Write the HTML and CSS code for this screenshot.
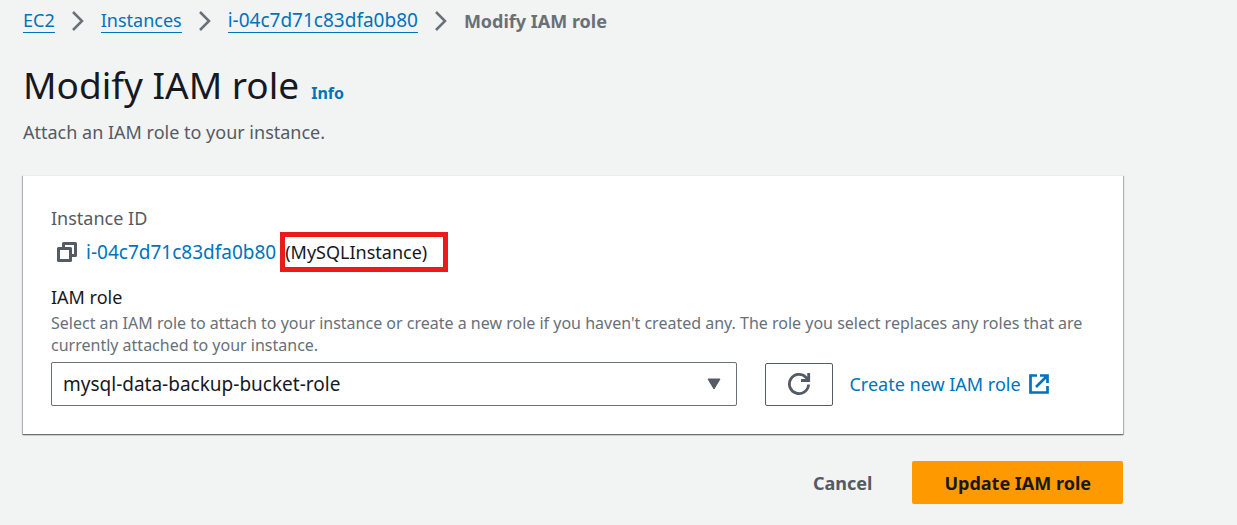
FILE: index.html
```html
<!DOCTYPE html>
<html lang="en">
<head>
<meta charset="utf-8">
<meta name="viewport" content="width=device-width, initial-scale=1">
<title>Modify IAM role</title>
<link rel="stylesheet" href="styles.css">
</head>
<body>
<main class="page">
  <nav class="breadcrumbs" aria-label="Breadcrumbs">
    <a class="crumb" href="#">EC2</a>
    <svg class="chevron" viewBox="0 0 12 20" aria-hidden="true"><path d="M1 1l9 9-9 9"/></svg>
    <a class="crumb" href="#">Instances</a>
    <svg class="chevron" viewBox="0 0 12 20" aria-hidden="true"><path d="M1 1l9 9-9 9"/></svg>
    <a class="crumb instance-id" href="#">i-04c7d71c83dfa0b80</a>
    <svg class="chevron" viewBox="0 0 12 20" aria-hidden="true"><path d="M1 1l9 9-9 9"/></svg>
    <span class="crumb-current" aria-current="page">Modify IAM role</span>
  </nav>

  <header class="header">
    <div class="title-row">
      <h1 class="title">Modify IAM role</h1>
      <a class="info" href="#">Info</a>
    </div>
    <p class="subtitle">Attach an IAM role to your instance.</p>
  </header>

  <form class="form">
    <section class="card">
      <div class="label muted">Instance ID</div>
      <div class="instance">
        <button class="copy" type="button" aria-label="Copy instance ID">
          <svg class="copy-icon" viewBox="0 0 20 20" aria-hidden="true"><path d="M1.5 6.5h12v12h-12zM6.5 6.5v-5h12v12h-5"/></svg>
        </button>
        <a class="link instance-id" href="#">i-04c7d71c83dfa0b80</a>
        <span class="highlight">(MySQLInstance)</span>
      </div>

      <label class="label" for="role">IAM role</label>
      <p class="hint" id="role-hint">Select an IAM role to attach to your instance or create a new role if you haven't created any. The role you select replaces any roles that are currently attached to your instance.</p>
      <div class="controls">
        <div class="select-wrap">
          <select class="select" id="role" aria-describedby="role-hint">
            <option>mysql-data-backup-bucket-role</option>
          </select>
          <svg class="caret" viewBox="0 0 14 12" aria-hidden="true"><path d="M1 1h12L7 11z"/></svg>
        </div>
        <div class="side">
          <button class="refresh" type="button" aria-label="Refresh roles">
            <svg class="refresh-icon" viewBox="0 0 24 24" aria-hidden="true"><path d="M21.6 12.5A9.6 9.6 0 1 1 18.8 5.2L21 7.6M21.7 1v7.5H14"/></svg>
          </button>
          <a class="link create" href="#">Create new IAM role
            <svg class="external-icon" viewBox="0 0 20 20" aria-hidden="true"><path d="M8 1.5H1.5v17h17V12M11 1.5h7.5V9M18 2L7 13"/></svg>
          </a>
        </div>
      </div>
    </section>

    <div class="actions">
      <button class="button" type="button">Cancel</button>
      <button class="button primary" type="submit">Update IAM role</button>
    </div>
  </form>
</main>
</body>
</html>
```

FILE: styles.css
```css
* {
  box-sizing: border-box;
}

body {
  margin: 0;
  background: #f2f3f3;
  color: #16191f;
  font-family: "Noto Sans", "Open Sans", sans-serif;
  font-size: 18px;
  line-height: 28px;
}

.page {
  padding: 8px 114px 20px 23px;
}

.breadcrumbs {
  display: flex;
  align-items: center;
  gap: 17px;
  line-height: 24px;
}

.crumb {
  color: #0073bb;
  text-decoration: none;
  border-bottom: 1px solid #0073bb;
}

.instance-id {
  font-size: 19px;
}

.chevron {
  width: 12px;
  height: 20px;
  fill: none;
  stroke: #687078;
  stroke-width: 2.5;
}

.crumb-current {
  color: #687078;
  font-weight: 700;
}

.header {
  margin: 28px 0 29px;
}

.title-row {
  display: flex;
  align-items: baseline;
  gap: 12px;
}

.title {
  margin: 0;
  font-size: 37px;
  font-weight: 400;
  line-height: 48px;
}

.info {
  color: #0073bb;
  font-size: 16px;
  font-weight: 700;
  text-decoration: none;
}

.subtitle {
  margin: 9px 0 0;
  color: #545b64;
}

.card {
  padding: 28px;
  background: #fff;
  border-top: 1px solid #eaeded;
  box-shadow: 0 1px 1px #687078, 1px 1px 1px #b6bec0, -1px 1px 1px #b6bec0;
}

.label {
  display: block;
}

.muted {
  color: #545b64;
}

.instance {
  display: flex;
  align-items: center;
  height: 40px;
  margin-bottom: 11px;
}

.copy {
  display: flex;
  margin: 0 9px 0 6px;
  padding: 0;
  border: 0;
  background: none;
}

.copy-icon {
  width: 20px;
  height: 20px;
  fill: none;
  stroke: #545b64;
  stroke-width: 3;
  stroke-linejoin: round;
}

.link {
  color: #0073bb;
  text-decoration: none;
}

.highlight {
  margin-left: 4px;
  padding: 1px 16px 1px 0;
  border: 5px solid #e91b1b;
}

.hint {
  margin: 0 0 6px;
  padding-top: 1px;
  color: #687078;
  font-size: 16px;
  line-height: 22px;
}

.controls {
  display: grid;
  grid-template-columns: 25fr 12fr;
  gap: 28px;
  align-items: center;
}

.select-wrap {
  position: relative;
}

.select {
  display: block;
  width: 100%;
  height: 44px;
  padding: 0 40px 0 11px;
  appearance: none;
  border: 1px solid #687078;
  border-radius: 2px;
  background: #fff;
  color: inherit;
  font: inherit;
  font-size: 19px;
}

.caret {
  position: absolute;
  top: 16px;
  right: 16px;
  width: 14px;
  height: 12px;
  fill: #545b64;
  stroke: #545b64;
  stroke-linejoin: round;
  pointer-events: none;
}

.side {
  display: flex;
  align-items: center;
  gap: 16px;
}

.refresh {
  display: flex;
  align-items: center;
  justify-content: center;
  flex: none;
  width: 68px;
  height: 43px;
  padding: 0;
  border: 1px solid #545b64;
  border-radius: 2px;
  background: #fff;
}

.refresh-icon {
  width: 24px;
  height: 24px;
  fill: none;
  stroke: #545b64;
  stroke-width: 2.8;
}

.create {
  display: flex;
  align-items: center;
  gap: 8px;
  white-space: nowrap;
}

.external-icon {
  width: 20px;
  height: 20px;
  fill: none;
  stroke: #0073bb;
  stroke-width: 2.7;
}

.actions {
  display: flex;
  justify-content: flex-end;
  gap: 8px;
  margin-top: 27px;
}

.button {
  height: 43px;
  padding: 0 32px;
  border: 0;
  border-radius: 2px;
  background: none;
  color: #545b64;
  font: inherit;
  font-weight: 700;
}

.primary {
  background: #ff9900;
  color: #16191f;
}
```
